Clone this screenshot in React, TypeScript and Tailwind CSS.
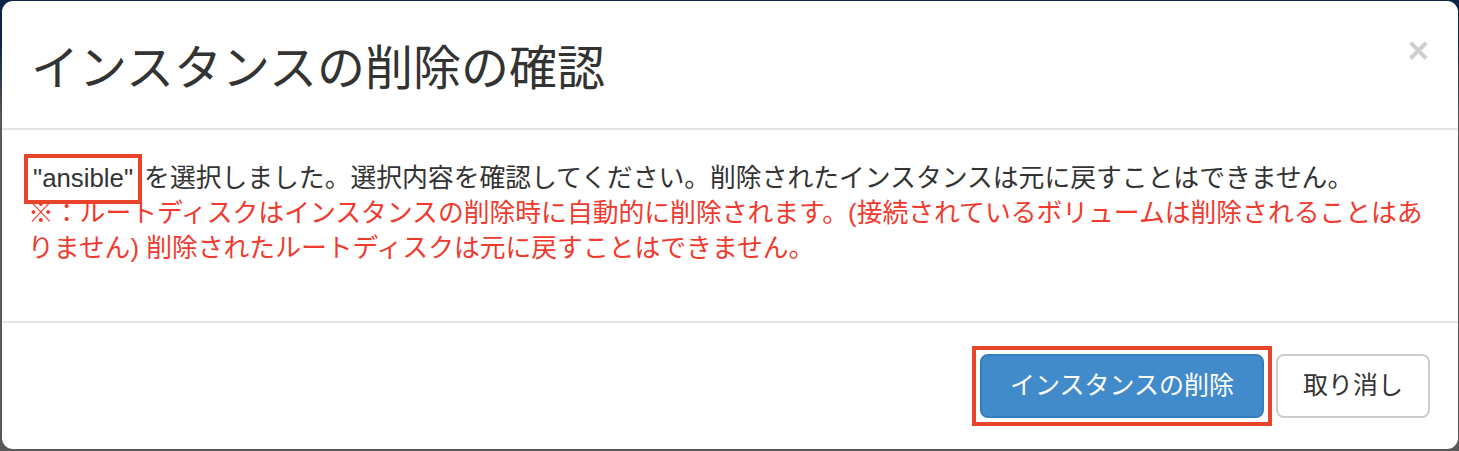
export default function App() {
  return (
    <div
      className="h-[451px] w-full overflow-hidden bg-[linear-gradient(to_bottom,#0b2447_0px,#0b2447_40px,#595959_120px,#595959_100%)] pl-[2px] pr-px pt-px"
      style={{ fontFamily: '"Liberation Sans", "Noto Sans CJK JP", sans-serif' }}
    >
      <div className="flex h-[448px] flex-col rounded-[11px] bg-white text-[#333]">
        {/* header */}
        <div className="flex h-[129px] shrink-0 items-start justify-between border-b-2 border-[#e5e5e5] pl-[29px] pr-[29px]">
          <h3 className="mt-[41px] text-[48px] leading-[54px] font-normal">
            インスタンスの削除の確認
          </h3>
          <button className="mt-[31px] text-[37px] leading-none font-bold text-black/20">
            ×
          </button>
        </div>

        {/* body */}
        <div className="h-[193px] shrink-0 border-b-2 border-[#e5e5e5] pl-[26px] pr-[8px] pt-[31px] text-[25.8px] leading-[35px]">
          <p>
            <span className="-mb-[8px] -ml-[4px] -mt-[7px] mr-[2px] inline-block border-[4px] border-[#e8432b] px-[5px] pb-[4px] pt-[3px] leading-[35px]">
              "ansible"
            </span>
            を選択しました。選択内容を確認してください。削除されたインスタンスは元に戻すことはできません。
            <br />
            <span className="text-[#f03a2e]">
              ※：ルートディスクはインスタンスの削除時に自動的に削除されます。(接続されているボリュームは削除されることはあ
              <br />
              りません) 削除されたルートディスクは元に戻すことはできません。
            </span>
          </p>
        </div>

        {/* footer */}
        <div className="flex flex-1 items-start justify-end gap-[4px] pr-[28px] pt-[23px]">
          <div className="border-[4px] border-[#e8432b] p-[4px]">
            <button className="block h-[64px] rounded-[8px] border-2 border-[#357ebd] bg-[#428bca] px-[28px] text-[25px] text-white">
              インスタンスの削除
            </button>
          </div>
          <button className="mt-[8px] h-[64px] rounded-[8px] border-2 border-[#cccccc] bg-white px-[25px] text-[25px] text-[#333]">
            取り消し
          </button>
        </div>
      </div>
    </div>
  );
}
